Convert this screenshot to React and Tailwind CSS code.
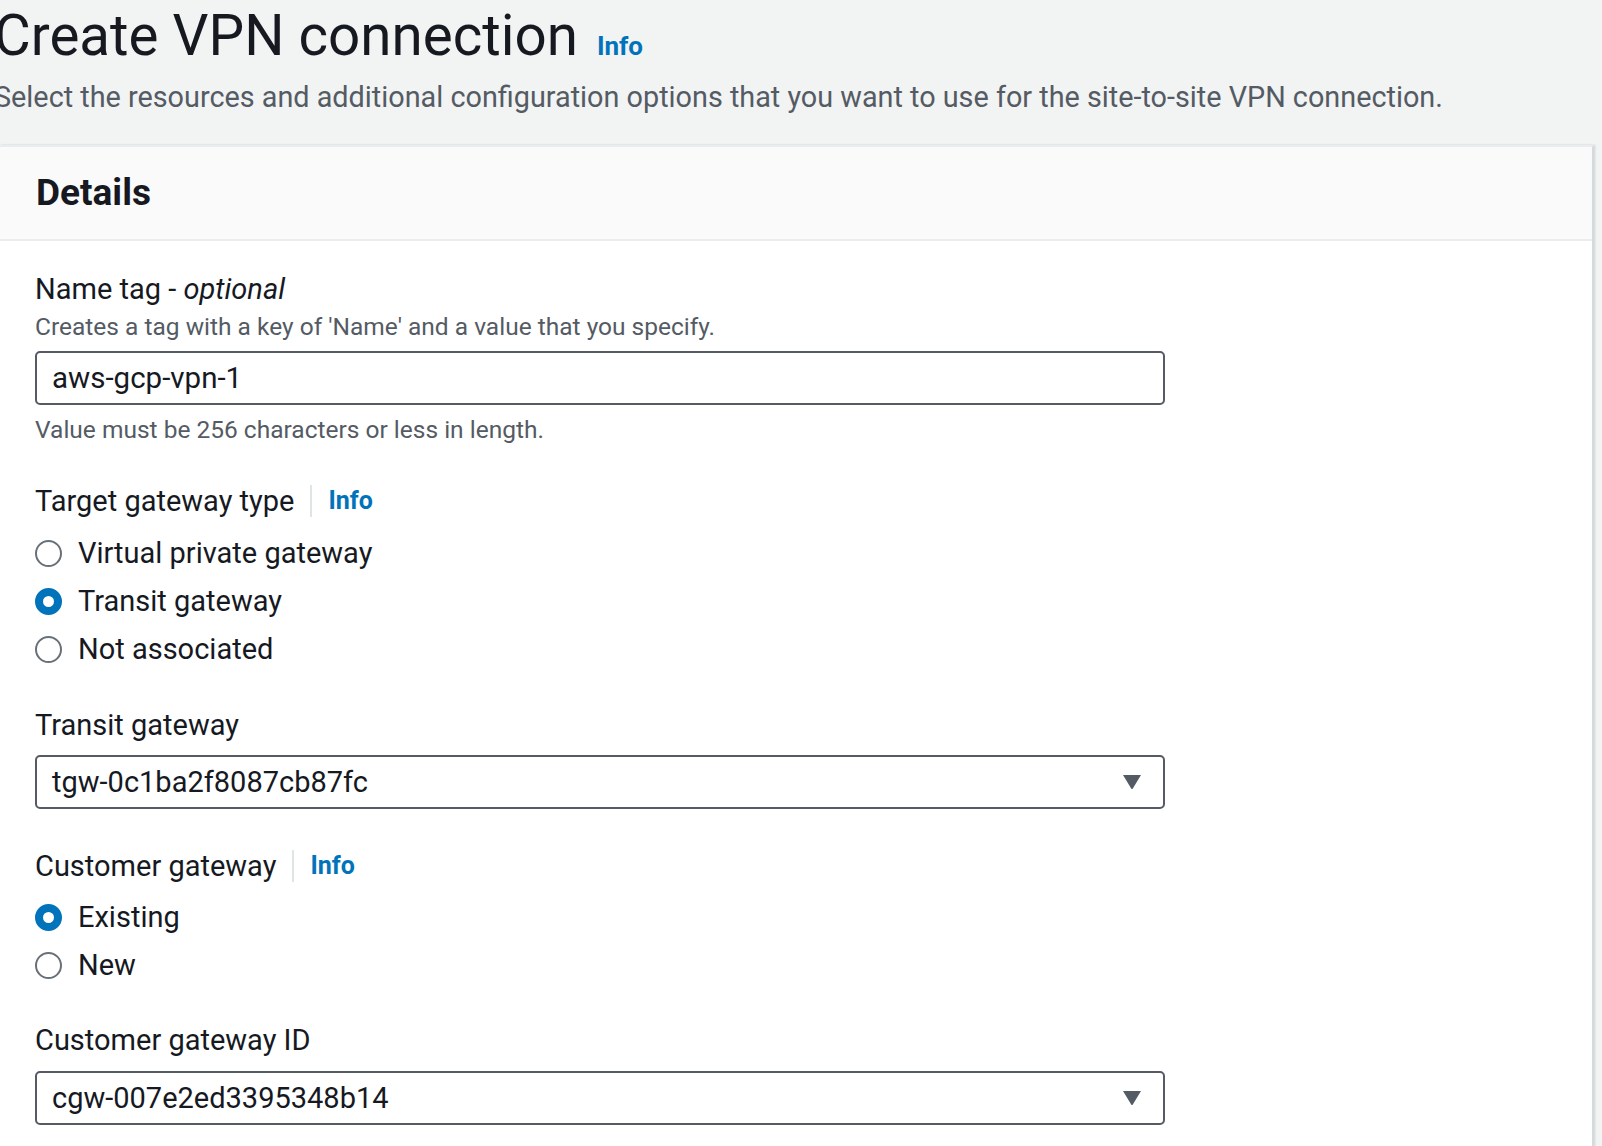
import React, { useState } from "react";

const Caret = () => (
  <svg width="20" height="16" viewBox="0 0 20 16" className="shrink-0">
    <path d="M1 1 L19 1 L10.8 14.6 Q10 15.6 9.2 14.6 Z" fill="#545b64" />
  </svg>
);

const Radio = ({ checked, label, onClick }) => (
  <div className="flex items-center h-[48px] cursor-pointer" onClick={onClick}>
    {checked ? (
      <span className="w-[27px] h-[27px] rounded-full border-[8px] border-[#0073bb] bg-white shrink-0" />
    ) : (
      <span className="w-[27px] h-[27px] rounded-full border-2 border-[#687078] bg-white shrink-0" />
    )}
    <span className="ml-[16px] text-[29px] leading-[36px] text-[#16191f]">{label}</span>
  </div>
);

const LabelWithInfo = ({ children }) => (
  <div className="flex items-center h-[36px]">
    <span className="text-[29px] leading-[36px] text-[#16191f]">{children}</span>
    <span className="ml-[16px] w-[2px] h-[32px] bg-[#dfe4e4]" />
    <a className="ml-[16px] text-[25px] font-bold text-[#0073bb] leading-[36px]">Info</a>
  </div>
);

const SelectBox = ({ value }) => (
  <div className="flex items-center justify-between w-[1130px] h-[54px] border-2 border-[#545b64] rounded-[5px] pl-[15px] pr-[21px] bg-white">
    <span className="text-[29px] leading-[36px] text-[#16191f]">{value}</span>
    <Caret />
  </div>
);

export default function App() {
  const [gatewayType, setGatewayType] = useState("transit");
  const [customer, setCustomer] = useState("existing");
  const [name, setName] = useState("aws-gcp-vpn-1");

  return (
    <div
      className="w-[1602px] h-[1146px] overflow-hidden bg-[#f2f3f3]"
      style={{ fontFamily: "Roboto, 'Noto Sans', sans-serif" }}
    >
      {/* Page header */}
      <div className="h-[145px] pt-[4px] -ml-[6px]">
        <div className="flex items-baseline">
          <h1 className="text-[56.5px] leading-[64px] text-[#16191f] font-normal">
            Create VPN connection
          </h1>
          <a className="ml-[19px] text-[26px] font-bold text-[#0073bb]">Info</a>
        </div>
        <p className="mt-[11px] text-[28.8px] leading-[36px] text-[#545b64]">
          Select the resources and additional configuration options that you want to use for the site-to-site VPN connection.
        </p>
      </div>

      {/* Details panel */}
      <div className="w-[1594px] h-[1001px] bg-white border-t-2 border-[#eaeded] border-r-2 border-r-[#d5dbdb] shadow-[1px_0_2px_rgba(0,22,43,0.15)]">
        <div className="h-[94px] bg-[#fafafa] border-b-2 border-[#eaeded] flex items-center pl-[36px]">
          <h2 className="text-[37px] font-bold text-[#16191f] leading-[44px]">Details</h2>
        </div>

        <div className="pl-[35px] pt-[30px]">
          {/* Name tag */}
          <div className="text-[29px] leading-[36px] text-[#16191f]">
            Name tag - <i>optional</i>
          </div>
          <div className="mt-[4px] text-[24.5px] leading-[32px] text-[#545b64]">
            Creates a tag with a key of 'Name' and a value that you specify.
          </div>
          <input
            value={name}
            onChange={(e) => setName(e.target.value)}
            className="mt-[8px] block w-[1130px] h-[54px] border-2 border-[#545b64] rounded-[5px] pl-[15px] text-[29.5px] text-[#16191f] outline-none"
            style={{ fontFamily: "Roboto, 'Noto Sans', sans-serif" }}
          />
          <div className="mt-[9px] text-[24.5px] leading-[32px] text-[#545b64]">
            Value must be 256 characters or less in length.
          </div>

          {/* Target gateway type */}
          <div className="mt-[37px]">
            <LabelWithInfo>Target gateway type</LabelWithInfo>
          </div>
          <div className="mt-[10px]">
            <Radio
              label="Virtual private gateway"
              checked={gatewayType === "vgw"}
              onClick={() => setGatewayType("vgw")}
            />
            <Radio
              label="Transit gateway"
              checked={gatewayType === "transit"}
              onClick={() => setGatewayType("transit")}
            />
            <Radio
              label="Not associated"
              checked={gatewayType === "none"}
              onClick={() => setGatewayType("none")}
            />
          </div>

          {/* Transit gateway */}
          <div className="mt-[34px] text-[29px] leading-[36px] text-[#16191f]">Transit gateway</div>
          <div className="mt-[12px]">
            <SelectBox value="tgw-0c1ba2f8087cb87fc" />
          </div>

          {/* Customer gateway */}
          <div className="mt-[39px]">
            <LabelWithInfo>Customer gateway</LabelWithInfo>
          </div>
          <div className="mt-[9px]">
            <Radio
              label="Existing"
              checked={customer === "existing"}
              onClick={() => setCustomer("existing")}
            />
            <Radio
              label="New"
              checked={customer === "new"}
              onClick={() => setCustomer("new")}
            />
          </div>

          {/* Customer gateway ID */}
          <div className="mt-[33px] text-[29px] leading-[36px] text-[#16191f]">Customer gateway ID</div>
          <div className="mt-[13px]">
            <SelectBox value="cgw-007e2ed3395348b14" />
          </div>
        </div>
      </div>
    </div>
  );
}
